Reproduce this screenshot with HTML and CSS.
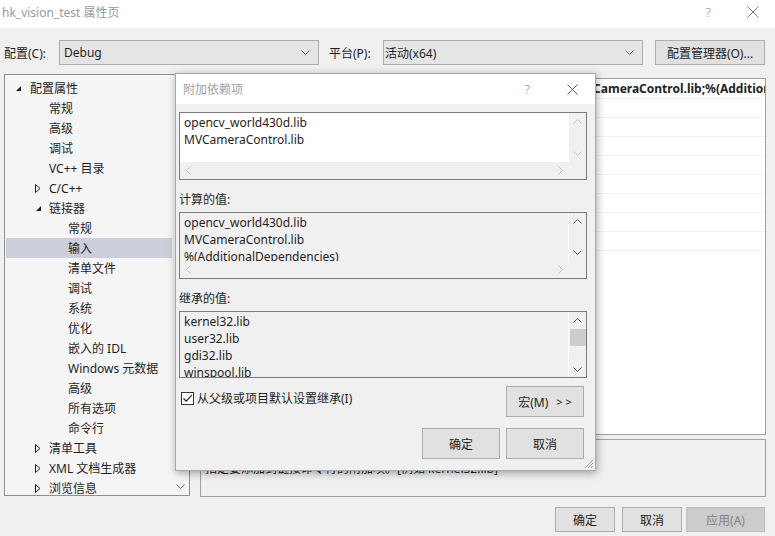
FILE: index.html
```html
<!DOCTYPE html>
<html lang="zh-CN">
<head>
<meta charset="utf-8">
<title>hk_vision_test 属性页</title>
<link rel="stylesheet" href="styles.css">
</head>
<body>
<div class="window">
  <div class="titlebar">
    <span class="title">hk_vision_test 属性页</span>
    <span class="tb-help">?</span>
    <svg class="tb-close" width="12" height="12" viewBox="0 0 12 12"><path d="M0.5 0.5 L11.5 11.5 M11.5 0.5 L0.5 11.5" stroke="#7a7a7a" stroke-width="1" fill="none"/></svg>
  </div>

  <div class="toolbar">
    <span class="tb-label">配置(C):</span>
    <div class="combo combo-config"><span>Debug</span><svg class="combo-chev" width="9" height="5" viewBox="0 0 9 5"><path d="M0.5 0.5 L4.5 4.5 L8.5 0.5" stroke="#606060" fill="none"/></svg></div>
    <span class="tb-label tb-label-platform">平台(P):</span>
    <div class="combo combo-platform"><span>活动(x64)</span><svg class="combo-chev" width="9" height="5" viewBox="0 0 9 5"><path d="M0.5 0.5 L4.5 4.5 L8.5 0.5" stroke="#606060" fill="none"/></svg></div>
    <button class="btn btn-manager">配置管理器(O)...</button>
  </div>

  <div class="main">
    <div class="tree">
      <div class="tree-list">
        <div class="row l0"><span class="exp"><svg width="7" height="7" viewBox="0 0 7 7"><path d="M6 1 L6 6 L1 6 Z" fill="#1e1e1e"/></svg></span>配置属性</div>
        <div class="row l1"><span class="exp"></span>常规</div>
        <div class="row l1"><span class="exp"></span>高级</div>
        <div class="row l1"><span class="exp"></span>调试</div>
        <div class="row l1"><span class="exp"></span>VC++ 目录</div>
        <div class="row l1"><span class="exp"><svg width="6" height="9" viewBox="0 0 6 9"><path d="M0.5 0.5 L5 4.5 L0.5 8.5 Z" fill="none" stroke="#1e1e1e"/></svg></span>C/C++</div>
        <div class="row l1"><span class="exp"><svg width="7" height="7" viewBox="0 0 7 7"><path d="M6 1 L6 6 L1 6 Z" fill="#1e1e1e"/></svg></span>链接器</div>
        <div class="row l2">常规</div>
        <div class="row l2 selected">输入</div>
        <div class="row l2">清单文件</div>
        <div class="row l2">调试</div>
        <div class="row l2">系统</div>
        <div class="row l2">优化</div>
        <div class="row l2">嵌入的 IDL</div>
        <div class="row l2">Windows 元数据</div>
        <div class="row l2">高级</div>
        <div class="row l2">所有选项</div>
        <div class="row l2">命令行</div>
        <div class="row l1"><span class="exp"><svg width="6" height="9" viewBox="0 0 6 9"><path d="M0.5 0.5 L5 4.5 L0.5 8.5 Z" fill="none" stroke="#1e1e1e"/></svg></span>清单工具</div>
        <div class="row l1"><span class="exp"><svg width="6" height="9" viewBox="0 0 6 9"><path d="M0.5 0.5 L5 4.5 L0.5 8.5 Z" fill="none" stroke="#1e1e1e"/></svg></span>XML 文档生成器</div>
        <div class="row l1"><span class="exp"><svg width="6" height="9" viewBox="0 0 6 9"><path d="M0.5 0.5 L5 4.5 L0.5 8.5 Z" fill="none" stroke="#1e1e1e"/></svg></span>浏览信息</div>
      </div>
      <div class="tree-scroll">
        <svg width="9" height="5" viewBox="0 0 9 5"><path d="M0.5 0.5 L4.5 4.5 L8.5 0.5" stroke="#606060" fill="none"/></svg>
      </div>
    </div>

    <div class="right">
      <div class="grid">
        <div class="grow first"><span class="gname">附加依赖项</span><span class="gval bold">opencv_world430d.lib;MVCameraControl.lib;%(AdditionalDependencies)</span></div>
        <div class="grow"><span class="gname">忽略所有默认库</span><span class="gval"></span></div>
        <div class="grow"><span class="gname">忽略特定默认库</span><span class="gval"></span></div>
        <div class="grow"><span class="gname">模块定义文件</span><span class="gval"></span></div>
        <div class="grow"><span class="gname">将模块添加到程序集</span><span class="gval"></span></div>
        <div class="grow"><span class="gname">嵌入托管资源文件</span><span class="gval"></span></div>
        <div class="grow"><span class="gname">强制符号引用</span><span class="gval"></span></div>
        <div class="grow"><span class="gname">延迟加载的 DLL</span><span class="gval"></span></div>
        <div class="grow"><span class="gname">程序集链接资源</span><span class="gval"></span></div>
      </div>
      <div class="desc">
        <div class="desc-title">附加依赖项</div>
        <div class="desc-text">指定要添加到链接命令行的附加项。[例如 kernel32.lib]</div>
      </div>
    </div>
  </div>

  <div class="footer">
    <button class="btn btn-foot">确定</button>
    <button class="btn btn-foot btn-cancel">取消</button>
    <button class="btn btn-foot btn-apply" disabled>应用(A)</button>
  </div>
</div>

<div class="dialog">
  <div class="dlg-title">
    <span class="dlg-title-text">附加依赖项</span>
    <span class="dlg-help">?</span>
    <svg class="dlg-close" width="11" height="11" viewBox="0 0 11 11"><path d="M0.5 0.5 L10.5 10.5 M10.5 0.5 L0.5 10.5" stroke="#5f5f5f" stroke-width="1" fill="none"/></svg>
  </div>
  <div class="dlg-body">
    <div class="box box-edit">
      <div class="box-content white">
        <div>opencv_world430d.lib</div>
        <div>MVCameraControl.lib</div>
      </div>
      <div class="vscroll">
        <svg width="9" height="5" viewBox="0 0 9 5"><path d="M0.5 4.5 L4.5 0.5 L8.5 4.5" stroke="#c2c2c2" fill="none"/></svg>
        <svg width="9" height="5" viewBox="0 0 9 5"><path d="M0.5 0.5 L4.5 4.5 L8.5 0.5" stroke="#c2c2c2" fill="none"/></svg>
      </div>
      <div class="hscroll">
        <svg width="5" height="9" viewBox="0 0 5 9"><path d="M4.5 0.5 L0.5 4.5 L4.5 8.5" stroke="#c2c2c2" fill="none"/></svg>
        <svg width="5" height="9" viewBox="0 0 5 9"><path d="M0.5 0.5 L4.5 4.5 L0.5 8.5" stroke="#c2c2c2" fill="none"/></svg>
      </div>
      <div class="corner"></div>
    </div>

    <div class="dlg-label">计算的值:</div>
    <div class="box box-ro">
      <div class="box-content">
        <div>opencv_world430d.lib</div>
        <div>MVCameraControl.lib</div>
        <div>%(AdditionalDependencies)</div>
      </div>
      <div class="vscroll">
        <svg width="9" height="5" viewBox="0 0 9 5"><path d="M0.5 4.5 L4.5 0.5 L8.5 4.5" stroke="#606060" fill="none"/></svg>
        <svg width="9" height="5" viewBox="0 0 9 5"><path d="M0.5 0.5 L4.5 4.5 L8.5 0.5" stroke="#606060" fill="none"/></svg>
      </div>
      <div class="hscroll">
        <svg width="5" height="9" viewBox="0 0 5 9"><path d="M4.5 0.5 L0.5 4.5 L4.5 8.5" stroke="#c2c2c2" fill="none"/></svg>
        <svg width="5" height="9" viewBox="0 0 5 9"><path d="M0.5 0.5 L4.5 4.5 L0.5 8.5" stroke="#c2c2c2" fill="none"/></svg>
      </div>
      <div class="corner"></div>
    </div>

    <div class="dlg-label">继承的值:</div>
    <div class="box box-inh">
      <div class="box-content">
        <div>kernel32.lib</div>
        <div>user32.lib</div>
        <div>gdi32.lib</div>
        <div>winspool.lib</div>
      </div>
      <div class="vscroll vscroll-thumb">
        <svg width="9" height="5" viewBox="0 0 9 5"><path d="M0.5 4.5 L4.5 0.5 L8.5 4.5" stroke="#606060" fill="none"/></svg>
        <div class="thumb"></div>
        <svg width="9" height="5" viewBox="0 0 9 5"><path d="M0.5 0.5 L4.5 4.5 L8.5 0.5" stroke="#606060" fill="none"/></svg>
      </div>
    </div>

    <div class="opt-row">
      <label class="check">
        <span class="checkbox"><svg width="11" height="11" viewBox="0 0 11 11"><path d="M1.5 5.5 L4.2 8.2 L9.8 2.2" stroke="#1e1e1e" stroke-width="1.2" fill="none"/></svg></span>
        <span>从父级或项目默认设置继承(I)</span>
      </label>
      <button class="btn btn-dlg btn-macro">宏(M)<span class="gt">&gt;&gt;</span></button>
    </div>

    <div class="dlg-buttons">
      <button class="btn btn-dlg">确定</button>
      <button class="btn btn-dlg">取消</button>
    </div>
  </div>
  <svg class="grip" width="10" height="10" viewBox="0 0 10 10"><path d="M9 1 L1 9 M9 4 L4 9 M9 7 L7 9" stroke="#9a9a9a" stroke-width="1" fill="none"/></svg>
</div>
</body>
</html>
```

FILE: styles.css
```css
* { box-sizing: border-box; }

html, body {
  margin: 0;
  padding: 0;
}

body {
  width: 775px;
  height: 536px;
  overflow: hidden;
  position: relative;
  background: #f0f0f0;
  font-family: "Noto Sans", "Noto Sans CJK SC", sans-serif;
  font-size: 12px;
  color: #1e1e1e;
}

.window {
  width: 775px;
  height: 536px;
  display: flex;
  flex-direction: column;
}

/* title bar */
.titlebar {
  height: 28px;
  background: #ffffff;
  display: flex;
  align-items: center;
  padding-left: 2px;
  flex: none;
}
.title {
  color: #999999;
  font-size: 12px;
  flex: 1;
  margin-top: -4px;
}
.tb-help {
  color: #8a8a8a;
  font-size: 13px;
  margin-right: 36px;
  margin-top: -4px;
  font-weight: 300;
}
.tb-close {
  margin-right: 16px;
  margin-top: -4px;
}

/* toolbar */
.toolbar {
  display: flex;
  align-items: center;
  height: 25px;
  margin-top: 12px;
  padding-left: 4px;
  flex: none;
}
.tb-label {
  width: 55px;
  flex: none;
}
.tb-label-platform {
  margin-left: 10px;
  width: 54px;
}
.combo {
  width: 260px;
  height: 25px;
  background: #e5e5e5;
  border: 1px solid #acacac;
  display: flex;
  align-items: center;
  justify-content: space-between;
  padding: 0 8px 0 4px;
  flex: none;
}
.combo-platform {
  padding-left: 1px;
}
.combo-chev {
  display: block;
}

.btn {
  font-family: "Noto Sans", "Noto Sans CJK SC", sans-serif;
  font-size: 12px;
  color: #1e1e1e;
  background: #e1e1e1;
  border: 1px solid #adadad;
  padding: 0;
  margin: 0;
  display: flex;
  align-items: center;
  justify-content: center;
}
.btn-manager {
  margin-left: 12px;
  width: 110px;
  height: 25px;
}

/* main */
.main {
  display: flex;
  margin-top: 9px;
  flex: none;
}

.tree {
  margin-left: 4px;
  width: 186px;
  height: 422px;
  border: 1px solid #8e8f94;
  background: #f5f5f5;
  display: flex;
  overflow: hidden;
}
.tree-list {
  width: 167px;
  padding-top: 3px;
  flex: none;
}
.row {
  height: 20px;
  display: flex;
  align-items: center;
  white-space: nowrap;
}
.row.l0 { padding-left: 10px; }
.row.l1 { padding-left: 30px; }
.row.l2 { padding-left: 63px; }
.exp {
  width: 14px;
  flex: none;
  display: flex;
  align-items: center;
}
.row.l0 .exp { width: 15px; }
.exp svg { display: block; }
.row.selected {
  background: #cccedb;
  margin-left: 1px;
  padding-left: 62px;
}
.tree-scroll {
  width: 17px;
  flex: none;
  display: flex;
  flex-direction: column;
  justify-content: flex-end;
  align-items: center;
  padding-bottom: 6px;
}

.right {
  margin-left: 10px;
  width: 566px;
  display: flex;
  flex-direction: column;
}
.grid {
  margin-top: 4px;
  height: 357px;
  background: #ffffff;
  border: 1px solid #a0a0a0;
  overflow: hidden;
}
.grow {
  height: 19px;
  border-bottom: 1px solid #f0f0f0;
  display: flex;
  align-items: center;
  white-space: nowrap;
}
.grow.first {
  height: 20px;
}
.gname {
  width: 237px;
  flex: none;
  padding-left: 18px;
}
.gval {
  padding-left: 4px;
  overflow: hidden;
  white-space: nowrap;
  flex: 1;
}
.gval.bold {
  font-weight: bold;
}

.desc {
  margin-top: 4px;
  height: 58px;
  border: 1px solid #a0a0a0;
  background: #f0f0f0;
  padding: 3px 4px;
  line-height: 17px;
}
.desc-title {
  font-weight: bold;
}

.footer {
  display: flex;
  justify-content: flex-end;
  margin-top: 10px;
  padding-right: 10px;
}
.btn-foot {
  width: 60px;
  height: 25px;
}
.btn-cancel {
  margin-left: 7px;
}
.btn-apply {
  margin-left: 4px;
  width: 79px;
  background: #cccccc;
  border-color: #bfbfbf;
  color: #838383;
}

/* dialog */
.dialog {
  position: absolute;
  left: 175px;
  top: 73px;
  width: 421px;
  height: 398px;
  background: #f0f0f0;
  border: 1px solid #a9a9a9;
  box-shadow: 1px 2px 8px rgba(0, 0, 0, 0.35);
  display: flex;
  flex-direction: column;
}
.dlg-title {
  height: 30px;
  background: #ffffff;
  display: flex;
  align-items: center;
  padding-left: 7px;
  flex: none;
}
.dlg-title-text {
  flex: 1;
  color: #a0a0a0;
}
.dlg-help {
  color: #8a8a8a;
  font-size: 13px;
  font-weight: 300;
  margin-right: 37px;
}
.dlg-close {
  margin-right: 17px;
}
.dlg-body {
  padding: 8px 8px 0 3px;
  display: flex;
  flex-direction: column;
}

.box {
  height: 68px;
  border: 1px solid #7a7a7a;
  display: grid;
  grid-template-columns: 1fr 17px;
  grid-template-rows: 1fr 17px;
  background: #f0f0f0;
  line-height: 17px;
}
.box-ro {
  height: 67px;
}
.box-inh {
  height: 67px;
  grid-template-rows: 1fr;
}
.box-content {
  padding: 1px 4px 0 4px;
  overflow: hidden;
  white-space: nowrap;
}
.box-content.white {
  background: #ffffff;
}
.box-ro .box-content,
.box-inh .box-content {
  border-right: 1px solid #ffffff;
}
.vscroll {
  display: flex;
  flex-direction: column;
  justify-content: space-between;
  align-items: center;
  padding: 6px 0 6px 0;
}
.vscroll-thumb {
  justify-content: flex-start;
  padding: 6px 0 5px 0;
}
.thumb {
  width: 16px;
  height: 17px;
  background: #cdcdcd;
  margin-top: 6px;
  margin-bottom: auto;
}
.vscroll svg, .hscroll svg { display: block; flex: none; }
.hscroll {
  display: flex;
  justify-content: space-between;
  align-items: center;
  padding: 0 6px;
}
.corner {
  background: #f0f0f0;
}

.dlg-label {
  margin-top: 11px;
  line-height: 17px;
  height: 17px;
}
.dlg-label + .box {
  margin-top: 4px;
}

.opt-row {
  display: flex;
  justify-content: space-between;
  align-items: flex-start;
  margin-top: 8px;
  padding-right: 3px;
}
.check {
  display: flex;
  align-items: center;
  margin-top: 3px;
  margin-left: 2px;
}
.checkbox {
  width: 13px;
  height: 13px;
  border: 1px solid #333333;
  background: #ffffff;
  display: flex;
  align-items: center;
  justify-content: center;
  margin-right: 3px;
}
.checkbox svg { display: block; }
.btn-dlg {
  width: 78px;
  height: 31px;
}
.btn-macro .gt {
  margin-left: 8px;
  letter-spacing: 3px;
  font-size: 11px;
  margin-right: -3px;
}
.dlg-buttons {
  display: flex;
  justify-content: flex-end;
  gap: 6px;
  margin-top: 11px;
  padding-right: 3px;
}
.grip {
  position: absolute;
  right: 1px;
  bottom: 1px;
}
```
